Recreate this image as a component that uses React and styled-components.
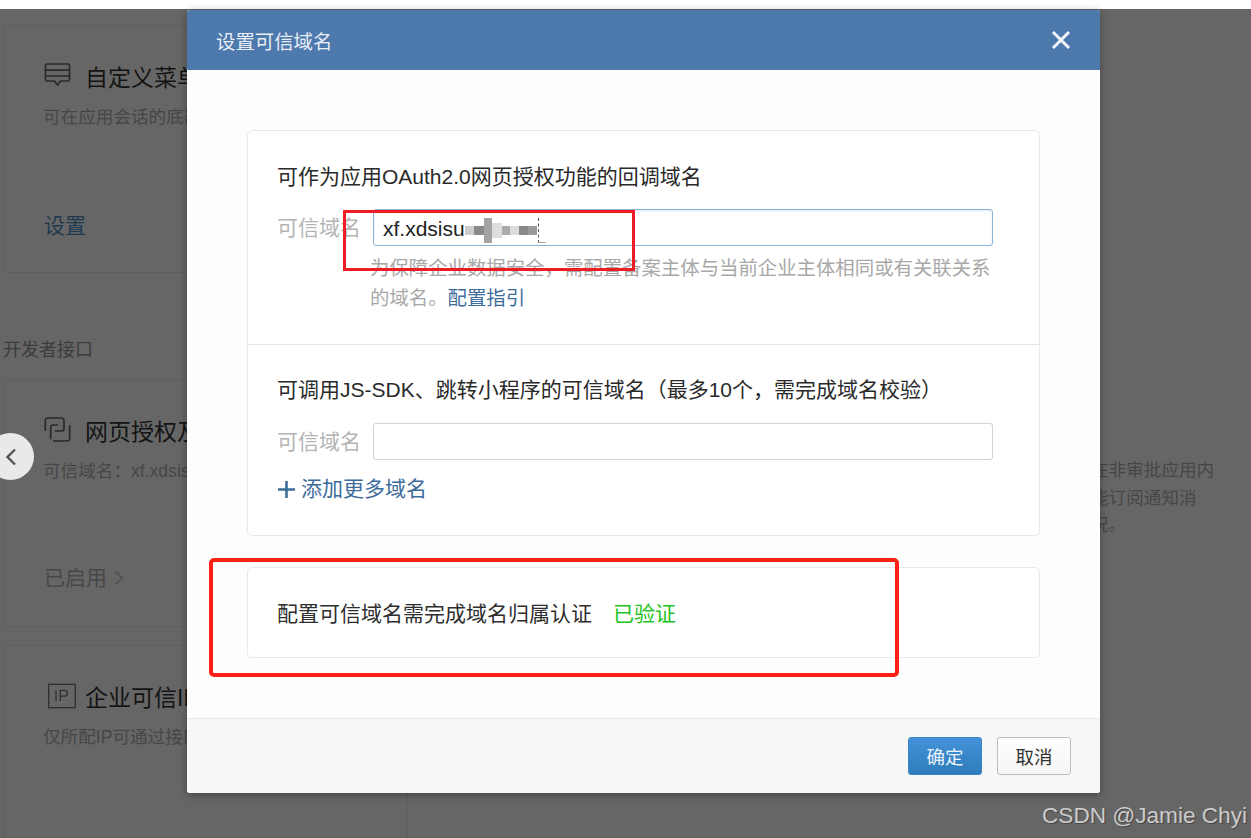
import React from "react";
import styled, { createGlobalStyle } from "styled-components";

const GlobalStyle = createGlobalStyle`
  html, body {
    margin: 0;
    padding: 0;
    background: #fff;
  }
  body {
    font-family: "Liberation Sans", "Noto Sans CJK SC", sans-serif;
  }
  * {
    box-sizing: border-box;
  }
`;

const Page = styled.div`
  position: relative;
  width: 1251px;
  height: 838px;
  overflow: hidden;
  padding-top: 9px;
`;

const Backdrop = styled.div`
  height: 829px;
  background: #666;
  padding: 16px 0 0 3px;
`;

const Card = styled.div`
  width: 405px;
  height: ${(p) => p.$h}px;
  margin-bottom: ${(p) => p.$mb || 0}px;
  border: 1px solid #5f5f5f;
  border-radius: 4px;
  padding: 36px 0 0 40px;
  display: flex;
  flex-direction: column;
`;

const CardTitle = styled.div`
  display: flex;
  align-items: center;
  gap: 13px;
  height: 28px;
  font-size: 23px;
  color: #141414;
  white-space: nowrap;
  svg {
    flex: none;
    overflow: visible;
  }
`;

const CardDesc = styled.div`
  margin: 15px 0 0 -1px;
  font-size: 17.6px;
  line-height: 24px;
  color: #464646;
  white-space: nowrap;
`;

const CardAction = styled.div`
  margin-top: auto;
  margin-bottom: ${(p) => p.$mb || 33}px;
  display: flex;
  align-items: center;
  gap: 7px;
  font-size: 21px;
  line-height: 26px;
  color: ${(p) => (p.$muted ? "#484848" : "#1f3a50")};
`;

const SectionLabel = styled.div`
  height: 106px;
  padding-top: 65px;
  font-size: 18px;
  line-height: 24px;
  color: #3c3c3c;
`;

const SideNote = styled.div`
  position: absolute;
  left: 1091px;
  top: 457px;
  font-size: 17.6px;
  line-height: 27.5px;
  color: #464646;
  white-space: nowrap;
`;

const BackButton = styled.div`
  position: absolute;
  left: -13px;
  top: 433px;
  width: 47px;
  height: 47px;
  border-radius: 50%;
  background: #e9e9e9;
  display: flex;
  align-items: center;
  justify-content: center;
`;

const Modal = styled.div`
  position: absolute;
  left: 187px;
  top: 10px;
  width: 913px;
  height: 783px;
  background: #fff;
  border-radius: 3px;
  box-shadow: 0 2px 8px rgba(0, 0, 0, 0.35);
  display: flex;
  flex-direction: column;
  overflow: hidden;
`;

const ModalHeader = styled.div`
  height: 60px;
  flex: none;
  background: #4e79ad;
  display: flex;
  align-items: center;
  justify-content: space-between;
  padding: 0 29px 0 29px;
  color: #e8eef5;
  font-size: 19.4px;
`;

const ModalBody = styled.div`
  flex: 1;
  padding: 60px 60px 0;
  display: flex;
  flex-direction: column;
  gap: 31px;
  background: #fdfdfd;
`;

const Panel = styled.div`
  border: 1px solid #e9e9e9;
  border-radius: 5px;
  background: #fff;
`;

const PanelSection = styled.div`
  height: ${(p) => p.$h}px;
  padding: ${(p) => p.$pt}px 46px 0 29px;
  & + & {
    border-top: 1px solid #e6e6e6;
  }
`;

const SectionTitle = styled.div`
  font-size: 21px;
  line-height: 30px;
  color: #2a2a2a;
  white-space: nowrap;
`;

const FieldRow = styled.div`
  display: flex;
  align-items: center;
  gap: 12px;
  margin-top: ${(p) => p.$mt}px;
`;

const FieldLabel = styled.div`
  width: 84px;
  flex: none;
  font-size: 21px;
  line-height: 30px;
  color: #b4b4b4;
  white-space: nowrap;
`;

const Field = styled.div`
  position: relative;
  flex: 1;
  height: 37px;
  border: 1px solid ${(p) => (p.$active ? "#8fb4da" : "#d4d4d4")};
  border-radius: 3px;
  padding-left: 9px;
  font-size: 21px;
  line-height: 37px;
  color: #222;
  background: #fff;
  box-shadow: ${(p) => (p.$active ? "inset 0 1px 2px rgba(80, 130, 190, 0.2)" : "none")};
`;

const Mosaic = styled.div`
  position: absolute;
  left: 91px;
  top: 8px;
  height: 25px;
  display: flex;
  align-items: center;
`;

const MosaicCell = styled.span`
  display: block;
  width: ${(p) => p.$w}px;
  height: ${(p) => p.$h || 9}px;
  background: ${(p) => p.$c};
`;

const MosaicEnd = styled.span`
  display: block;
  width: 8px;
  height: 25px;
  margin-left: 1px;
  border-left: 1px dashed #555;
  border-bottom: 1px solid #aaa;
`;

const Hint = styled.div`
  margin: 7px -4px 0 93px;
  font-size: 19.4px;
  line-height: 30px;
  color: #a8a8a8;
`;

const GuideLink = styled.span`
  color: #3d6c9b;
`;

const AddMore = styled.div`
  display: flex;
  align-items: center;
  gap: 5px;
  margin-top: 14px;
  font-size: 21px;
  line-height: 30px;
  color: #3d6c9b;
`;

const VerifyPanel = styled(Panel)`
  height: 91px;
  padding: 0 0 2px 29px;
  display: flex;
  align-items: center;
  gap: 21px;
  font-size: 21px;
  color: #2e2e2e;
`;

const Verified = styled.span`
  color: #22c322;
`;

const ModalFooter = styled.div`
  height: 75px;
  flex: none;
  background: #f7f7f7;
  border-top: 1px solid #e8e8e8;
  display: flex;
  align-items: flex-start;
  justify-content: flex-end;
  gap: 15px;
  padding: 18px 29px 0 0;
`;

const Button = styled.div`
  width: 74px;
  height: 38px;
  border-radius: 3px;
  display: flex;
  align-items: center;
  justify-content: center;
  font-size: 18.5px;
  border: 1px solid ${(p) => (p.$primary ? "#3a86c8" : "#bdbdbd")};
  color: ${(p) => (p.$primary ? "#eaf3fb" : "#333")};
  background: ${(p) =>
    p.$primary
      ? "linear-gradient(#4392d9, #2f7cbb)"
      : "linear-gradient(#fff, #f5f5f5)"};
`;

const Annotation = styled.div`
  position: absolute;
  left: ${(p) => p.$x}px;
  top: ${(p) => p.$y}px;
  width: ${(p) => p.$w}px;
  height: ${(p) => p.$h}px;
  border: ${(p) => p.$b}px solid ${(p) => p.$c};
  border-radius: ${(p) => p.$r || 0}px;
  pointer-events: none;
`;

const Watermark = styled.div`
  position: absolute;
  right: 4px;
  top: 802px;
  font-size: 22.6px;
  line-height: 28px;
  color: #cbcbcb;
  text-shadow: 1px 1px 1px rgba(0, 0, 0, 0.35);
  white-space: nowrap;
`;

const MenuIcon = () => (
  <svg width="28" height="26" viewBox="0 0 28 26" fill="none" stroke="#2a2a2a" strokeWidth="1.7">
    <path d="M3 1h21a1.500 1.500 0 0 1 1.500 1.500v14a1.500 1.500 0 0 1-1.500 1.500h-7.500l-3 4-3-4H3a1.500 1.500 0 0 1-1.500-1.500v-14A1.500 1.500 0 0 1 3 1z" />
    <path d="M1.500 7.200h24M1.500 13h24" />
  </svg>
);

const LinkIcon = () => (
  <svg width="28" height="26" viewBox="0 0 28 26" fill="none" stroke="#2a2a2a" strokeWidth="1.7">
    <path d="M1.300 14V3.500A2.500 2.500 0 0 1 3.800 1H17.500a2.500 2.500 0 0 1 2.500 2.500V11.500a2.500 2.500 0 0 1-2.500 2.500H10.700" />
    <path d="M25.700 8.300V21.500a2.500 2.500 0 0 1-2.500 2.500H9" />
    <path d="M6.700 22.300V10.500A2.500 2.500 0 0 1 9.200 8H14" />
  </svg>
);

const IpIcon = () => (
  <svg width="28" height="26" viewBox="0 0 28 26" fill="none" stroke="#2f2f2f" strokeWidth="1.3">
    <rect x="4.700" y="1.300" width="26.600" height="23.400" />
    <path d="M12 7.300V18M16.300 18V7.300h4.200a2.900 2.900 0 0 1 0 5.800h-4.200" />
  </svg>
);

const SmallChevron = () => (
  <svg width="10" height="16" viewBox="0 0 10 16" fill="none" stroke="#555" strokeWidth="2.2">
    <path d="M1.500 1.500 8 8l-6.500 6.500" />
  </svg>
);

const mosaicCells = [
  { w: 9, c: "#cdcdcd" },
  { w: 10, c: "#8a8a8a" },
  { w: 8, c: "#a3a3a3", h: 25 },
  { w: 10, c: "#dedede", h: 15 },
  { w: 8, c: "#ababab" },
  { w: 9, c: "#dcdcdc" },
  { w: 9, c: "#888" },
  { w: 9, c: "#9a9a9a" },
];

export default function App() {
  return (
    <Page>
      <GlobalStyle />
      <Backdrop>
        <Card $h={248}>
          <CardTitle>
            <MenuIcon />
            自定义菜单
          </CardTitle>
          <CardDesc>可在应用会话的底部</CardDesc>
          <CardAction>设置</CardAction>
        </Card>
        <SectionLabel>开发者接口</SectionLabel>
        <Card $h={248} $mb={18}>
          <CardTitle>
            <LinkIcon />
            网页授权及
          </CardTitle>
          <CardDesc>可信域名：xf.xdsisu</CardDesc>
          <CardAction $muted $mb={35}>
            已启用
            <SmallChevron />
          </CardAction>
        </Card>
        <Card $h={248}>
          <CardTitle>
            <IpIcon />
            企业可信IP
          </CardTitle>
          <CardDesc>仅所配IP可通过接口</CardDesc>
          <CardAction $mb={-14}>配置</CardAction>
        </Card>
      </Backdrop>

      <SideNote>
        在非审批应用内
        <br />
        能订阅通知消
        <br />
        况。
      </SideNote>

      <BackButton>
        <svg width="14" height="20" viewBox="0 0 14 20" fill="none" stroke="#555" strokeWidth="2.4">
          <path d="M11 2.500 3.500 10l7.500 7.500" />
        </svg>
      </BackButton>

      <Modal>
        <ModalHeader>
          设置可信域名
          <svg width="20" height="20" viewBox="0 0 20 20" fill="none" stroke="#f2f5f9" strokeWidth="3">
            <path d="M2 2l16 16M18 2 2 18" />
          </svg>
        </ModalHeader>
        <ModalBody>
          <Panel>
            <PanelSection $h={213} $pt={31}>
              <SectionTitle>可作为应用OAuth2.0网页授权功能的回调域名</SectionTitle>
              <FieldRow $mt={17}>
                <FieldLabel>可信域名</FieldLabel>
                <Field $active>
                  xf.xdsisu
                  <Mosaic>
                    {mosaicCells.map((cell, i) => (
                      <MosaicCell key={i} $w={cell.w} $h={cell.h} $c={cell.c} />
                    ))}
                    <MosaicEnd />
                  </Mosaic>
                </Field>
              </FieldRow>
              <Hint>
                为保障企业数据安全，需配置备案主体与当前企业主体相同或有关联关系的域名。
                <GuideLink>配置指引</GuideLink>
              </Hint>
            </PanelSection>
            <PanelSection $h={191} $pt={30}>
              <SectionTitle>可调用JS-SDK、跳转小程序的可信域名（最多10个，需完成域名校验）</SectionTitle>
              <FieldRow $mt={18}>
                <FieldLabel>可信域名</FieldLabel>
                <Field />
              </FieldRow>
              <AddMore>
                <svg width="19" height="19" viewBox="0 0 19 19" fill="none" stroke="#3d6c9b" strokeWidth="2.600">
                  <path d="M9.500 1v17M1 9.500h17" />
                </svg>
                添加更多域名
              </AddMore>
            </PanelSection>
          </Panel>
          <VerifyPanel>
            配置可信域名需完成域名归属认证
            <Verified>已验证</Verified>
          </VerifyPanel>
        </ModalBody>
        <ModalFooter>
          <Button $primary>确定</Button>
          <Button>取消</Button>
        </ModalFooter>
      </Modal>

      <Annotation $x={343} $y={210} $w={292} $h={61} $b={3} $c="#ee1c25" />
      <Annotation $x={209} $y={558} $w={690} $h={119} $b={4} $c="#ff2015" $r={5} />

      <Watermark>CSDN @Jamie Chyi</Watermark>
    </Page>
  );
}
